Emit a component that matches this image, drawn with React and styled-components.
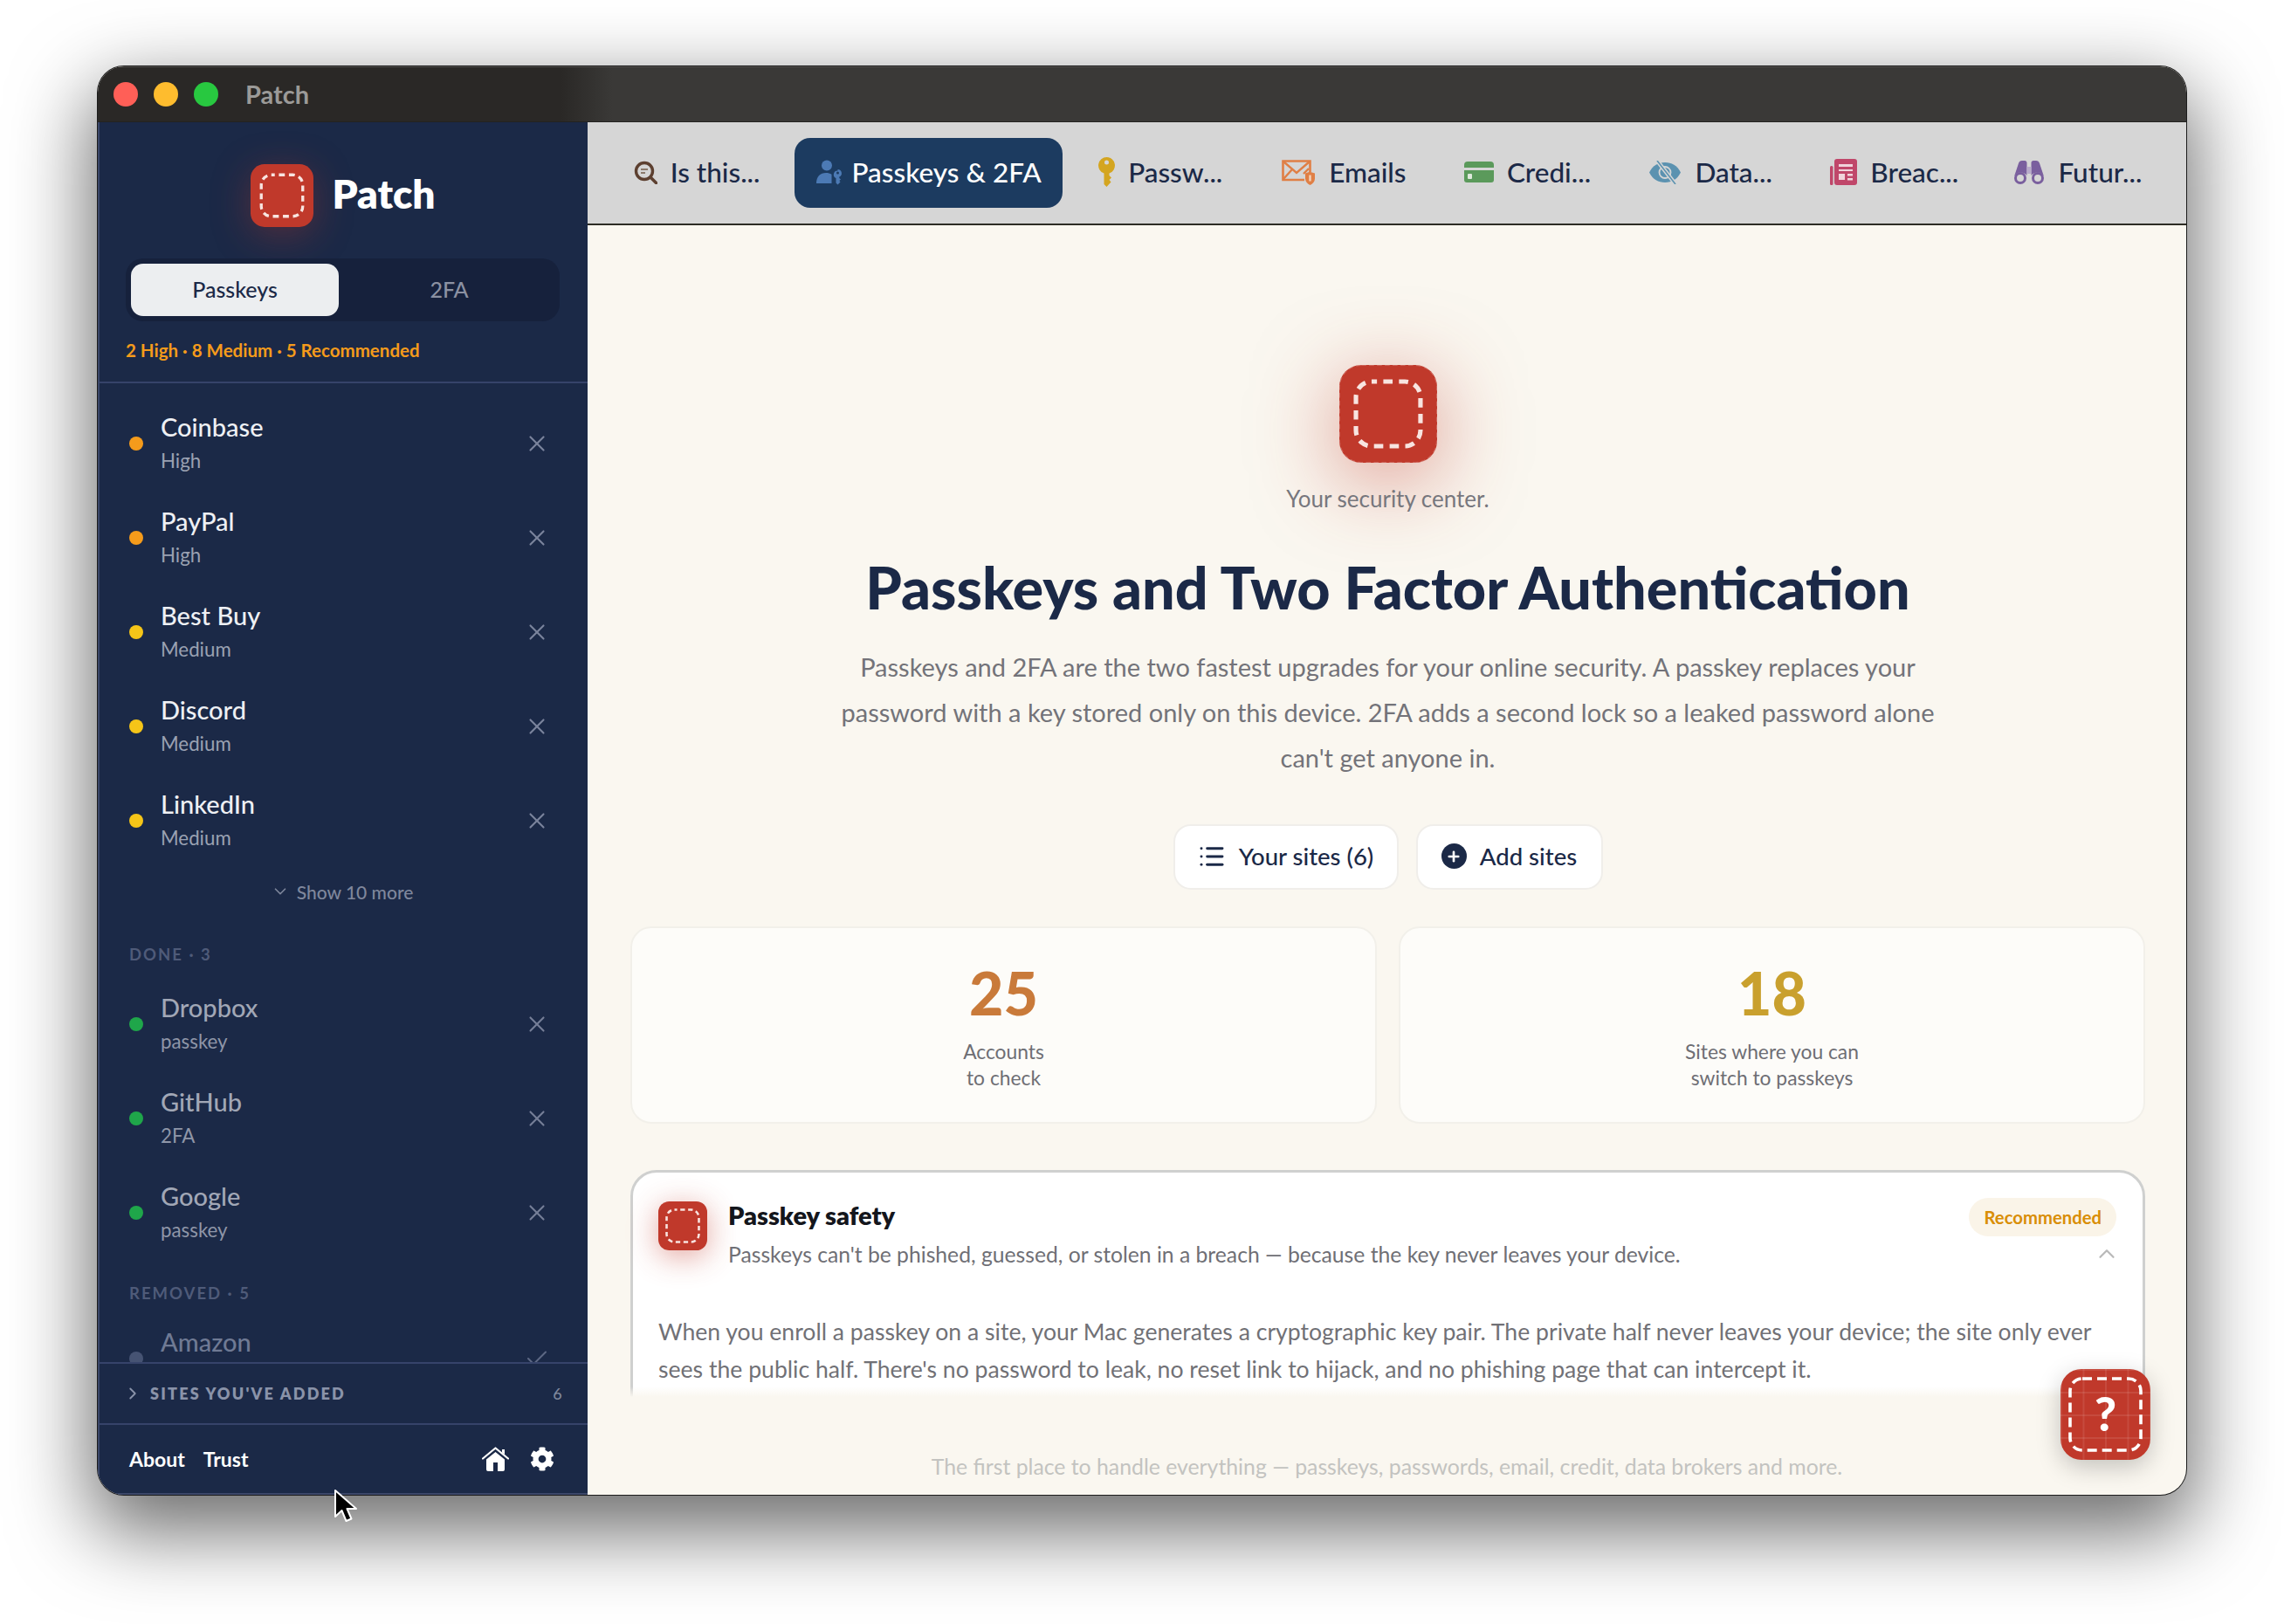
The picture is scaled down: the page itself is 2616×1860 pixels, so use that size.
import React from 'react';
import styled, { createGlobalStyle } from 'styled-components';
import { X, Check, ChevronDown, ChevronRight, ChevronUp, List, Plus } from 'lucide-react';
import { FaCog } from 'react-icons/fa';

const NAVY = '#1b2947';
const RED = '#c0392b';
const FONT = 'Lato, "Noto Sans", sans-serif';

const GlobalStyle = createGlobalStyle`
  html, body {
    margin: 0;
    background: #fff;
  }
  * {
    box-sizing: border-box;
  }
  body {
    font-family: ${FONT};
    -webkit-font-smoothing: antialiased;
  }
`;

// 페이지 / 창
const Stage = styled.div`
  position: relative;
  width: 2616px;
  height: 1860px;
  padding: 76px 112px 148px;
  overflow: hidden;
`;

const Window = styled.div`
  position: relative;
  width: 2392px;
  height: 1636px;
  display: flex;
  flex-direction: column;
  border-radius: 30px;
  overflow: hidden;
  background: #faf7f0;
  box-shadow: 0 0 0 1px #1c1c1c, 0 34px 90px 8px rgba(0, 0, 0, 0.58);
`;

const TitleBar = styled.div`
  height: 64px;
  flex: none;
  display: flex;
  align-items: center;
  padding-left: 18px;
  background: linear-gradient(to right, #2a2826 0, #2a2826 530px, #3a3937 590px);
  border-top: 1px solid #55524f;
  border-bottom: 1px solid #232220;
`;

const Light = styled.span`
  width: 28px;
  height: 28px;
  border-radius: 50%;
  margin-right: 18px;
  background: ${(p) => p.$color};
`;

const WindowTitle = styled.span`
  margin-left: 13px;
  padding-bottom: 2px;
  font-size: 29px;
  font-weight: 700;
  color: #9b9a98;
`;

const Body = styled.div`
  flex: 1;
  min-height: 0;
  display: flex;
`;

// 사이드바
const Sidebar = styled.aside`
  width: 561px;
  flex: none;
  display: flex;
  flex-direction: column;
  background: ${NAVY};
  border-left: 2px solid #3b4769;
  border-bottom: 2px solid #3b4769;
`;

const Brand = styled.div`
  margin-top: 48px;
  height: 72px;
  display: flex;
  align-items: center;
  justify-content: center;
  gap: 21px;
  padding-right: 1px;
`;

const BrandName = styled.span`
  font-size: 46px;
  font-weight: 800;
  color: #fff;
  line-height: 66px;
  margin-bottom: 4px;
`;

const MarkBox = styled.span`
  display: block;
  flex: none;
  width: ${(p) => p.$size}px;
  height: ${(p) => p.$size}px;
  border-radius: 22%;
  box-shadow: 0 ${(p) => p.$size * p.$spread * 0.2}px ${(p) => p.$size * p.$spread}px rgba(192, 57, 43, ${(p) => p.$glow});
  svg {
    display: block;
  }
`;

const Segmented = styled.div`
  margin: 36px 32px 0 30px;
  height: 72px;
  padding: 6px;
  display: grid;
  grid-template-columns: 238px 1fr;
  border-radius: 20px;
  background: #16213c;
`;

const Segment = styled.button`
  border: 0;
  padding: 0 0 3px ${(p) => (p.$active ? 0 : 6)}px;
  border-radius: 14px;
  font-family: ${FONT};
  font-size: 25px;
  font-weight: 500;
  background: ${(p) => (p.$active ? '#eceef0' : 'transparent')};
  color: ${(p) => (p.$active ? NAVY : '#8b91a2')};
`;

const Summary = styled.div`
  margin-top: 18px;
  padding: 0 0 21px 30px;
  font-size: 20.5px;
  line-height: 30px;
  font-weight: 700;
  color: #f59b1b;
  border-bottom: 2px solid #36436a;
`;

const SiteList = styled.div`
  flex: 1;
  min-height: 0;
  overflow: hidden;
  padding-top: 15px;
`;

const Row = styled.div`
  height: 108px;
  display: flex;
  align-items: center;
  padding: 0 43px 0 34px;
  gap: 20px;
`;

const Dot = styled.span`
  width: 16px;
  height: 16px;
  border-radius: 50%;
  flex: none;
  background: ${(p) => p.$color};
`;

const SiteText = styled.div`
  flex: 1;
  min-width: 0;
`;

const SiteName = styled.div`
  font-size: 29px;
  line-height: 39px;
  font-weight: 500;
  color: ${(p) => p.$color};
`;

const SiteSub = styled.div`
  font-size: 22.3px;
  line-height: 39px;
  color: ${(p) => p.$color};
`;

const RowIcon = styled.span`
  display: flex;
  color: ${(p) => p.$color};
`;

const ShowMore = styled.div`
  height: 54px;
  display: flex;
  align-items: center;
  justify-content: center;
  gap: 8px;
  padding-right: 4px;
  font-size: 21px;
  font-weight: 500;
  color: #7f879c;
`;

const GroupLabel = styled.div`
  margin: ${(p) => p.$top}px 0 ${(p) => p.$bottom}px 34px;
  height: 36px;
  line-height: 36px;
  font-size: 18.5px;
  font-weight: 700;
  letter-spacing: 2px;
  color: #4f5b79;
`;

const AddedRow = styled.div`
  height: 72px;
  flex: none;
  display: flex;
  align-items: center;
  padding: 0 27px 0 27px;
  gap: 9px;
  border-top: 2px solid #36436a;
  border-bottom: 2px solid #36436a;
  font-size: 18px;
  font-weight: 800;
  letter-spacing: 2.2px;
  color: #8a93a9;
`;

const AddedCount = styled.span`
  margin-left: auto;
  font-weight: 500;
  color: #7f879c;
`;

const SideFooter = styled.div`
  height: 78px;
  flex: none;
  display: flex;
  align-items: center;
  padding: 0 38px 0 34px;
  font-size: 23px;
  font-weight: 700;
  color: #fff;
`;

const FooterLink = styled.span`
  margin-right: 21px;
`;

const FooterIcons = styled.div`
  margin-left: auto;
  display: flex;
  align-items: center;
  gap: 24px;
`;

// 탭 바
const Main = styled.main`
  flex: 1;
  min-width: 0;
  display: flex;
  flex-direction: column;
`;

const TabBar = styled.nav`
  height: 118px;
  flex: none;
  display: flex;
  align-items: center;
  gap: 14px;
  padding: 0 26px 0 27px;
  background: #d6d6d6;
  border-bottom: 2px solid #2d2c24;
`;

const Tab = styled.div`
  flex: ${(p) => (p.$active ? '0 0 307px' : '1 1 0')};
  min-width: 0;
  height: 80px;
  display: flex;
  align-items: center;
  justify-content: center;
  gap: ${(p) => (p.$active ? 11 : 15)}px;
  padding-bottom: 2px;
  border-radius: 18px;
  font-size: 31.5px;
  font-weight: 500;
  white-space: nowrap;
  color: ${(p) => (p.$active ? '#fff' : NAVY)};
  background: ${(p) => (p.$active ? '#1c3b60' : 'transparent')};
  svg {
    flex: none;
  }
`;

// 본문
const Scroll = styled.div`
  position: relative;
  flex: 1;
  min-height: 0;
  overflow: hidden;
  padding: 160px 47px 0 49px;
`;

const Fade = styled.div`
  position: absolute;
  left: 0;
  right: 0;
  bottom: 0;
  height: 12px;
  background: linear-gradient(to bottom, rgba(250, 247, 240, 0), #faf7f0);
`;

const Hero = styled.section`
  display: flex;
  flex-direction: column;
  align-items: center;
  text-align: center;
`;

const Tagline = styled.div`
  margin-top: 23px;
  font-size: 26px;
  line-height: 36px;
  color: #77777d;
`;

const Heading = styled.h1`
  margin: 43px 0 0;
  font-size: 66.5px;
  line-height: 80px;
  font-weight: 900;
  color: ${NAVY};
`;

const Lead = styled.p`
  margin: 26px 0 0;
  width: 1270px;
  font-size: 29px;
  line-height: 52px;
  color: #737379;
`;

const Actions = styled.div`
  margin-top: 50px;
  display: flex;
  gap: 20px;
`;

const ActionButton = styled.button`
  width: ${(p) => p.$width}px;
  height: 75px;
  display: flex;
  align-items: center;
  justify-content: center;
  gap: 15px;
  padding: 0 0 2px;
  border: 2px solid #f0eeea;
  border-radius: 20px;
  background: #fff;
  font-family: ${FONT};
  font-size: 27.5px;
  font-weight: 500;
  color: ${NAVY};
`;

const PlusDisc = styled.span`
  width: 29px;
  height: 29px;
  border-radius: 50%;
  display: flex;
  align-items: center;
  justify-content: center;
  background: ${NAVY};
  color: #fff;
`;

const Stats = styled.div`
  margin-top: 42px;
  display: grid;
  grid-template-columns: 1fr 1fr;
  gap: 25px;
`;

const StatCard = styled.div`
  height: 226px;
  padding-top: 34px;
  text-align: center;
  border-radius: 24px;
  border: 2px solid #f2f0ea;
  background: #fdfcf9;
`;

const StatNumber = styled.div`
  font-size: 68px;
  line-height: 80px;
  font-weight: 900;
  color: ${(p) => p.$color};
`;

const StatLabel = styled.div`
  margin-top: 12px;
  font-size: 22.8px;
  line-height: 30px;
  color: #6e6e74;
`;

const InfoCard = styled.article`
  margin-top: 53px;
  height: 420px;
  padding: 29px 30px 0 29px;
  border: 3px solid #cfd0cf;
  border-radius: 30px;
  background: #fff;
`;

const InfoHeader = styled.header`
  display: flex;
  align-items: flex-start;
  gap: 24px;
`;

const InfoIcon = styled.div`
  margin-top: 4px;
`;

const InfoText = styled.div`
  flex: 1;
  min-width: 0;
  padding-top: 5px;
`;

const InfoTitle = styled.div`
  font-size: 29px;
  line-height: 30px;
  font-weight: 800;
  color: #14161c;
`;

const InfoDesc = styled.div`
  margin-top: 8px;
  font-size: 24.7px;
  line-height: 44px;
  color: #6f6f75;
`;

const InfoSide = styled.div`
  display: flex;
  flex-direction: column;
  align-items: flex-end;
`;

const Badge = styled.span`
  height: 44px;
  padding: 0 17px;
  display: flex;
  align-items: center;
  border-radius: 22px;
  background: #faf4e8;
  font-size: 20.3px;
  font-weight: 700;
  color: #d98e06;
`;

const Chevron = styled.span`
  display: flex;
  margin: 5px -4px 0 0;
  color: #b9b9b9;
`;

const InfoBody = styled.p`
  margin: 45px 0 0;
  font-size: 26.6px;
  line-height: 43px;
  color: #717176;
`;

const Tagline2 = styled.div`
  height: 112px;
  flex: none;
  padding-top: 62px;
  text-align: center;
  font-size: 24.8px;
  line-height: 36px;
  color: #c3c3c0;
`;

const HelpButton = styled.button`
  position: absolute;
  right: 41px;
  bottom: 40px;
  width: 103px;
  height: 104px;
  padding: 0 0 4px;
  border: 0;
  border-radius: 24px;
  display: flex;
  align-items: center;
  justify-content: center;
  font-family: ${FONT};
  font-size: 54px;
  font-weight: 900;
  color: #fff;
  background-color: ${RED};
  background-image: linear-gradient(to right, rgba(255, 255, 255, 0.09) 2px, transparent 2px),
    linear-gradient(to bottom, rgba(255, 255, 255, 0.09) 2px, transparent 2px);
  background-size: 25.5px 26px;
  background-position: 0 0;
  box-shadow: 0 8px 28px rgba(0, 0, 0, 0.22);
  svg {
    position: absolute;
    inset: 0;
  }
`;

// 마우스 커서
const Cursor = styled.svg`
  position: absolute;
  left: 381px;
  top: 1705px;
`;

// 로고
const Mark = ({ size, glow = 0.4, spread = 0.6, stitched }) => (
  <MarkBox $size={size} $glow={glow} $spread={spread}>
    <svg width={size} height={size} viewBox="0 0 100 100">
      <rect width="100" height="100" rx="22" fill={RED} />
      {stitched && (
        <rect x="0.5" y="0.5" width="99" height="99" rx="22" fill="none" stroke="#fff" strokeOpacity="0.35" strokeWidth="0.6" strokeDasharray="5 3" />
      )}
      <rect x="17" y="17" width="66" height="66" rx="16" fill="none" stroke="#f8e4e0" strokeWidth="4.6" strokeDasharray="9.5 6.5" strokeDashoffset="4" />
    </svg>
  </MarkBox>
);

// 탭 아이콘
const SearchIcon = () => (
  <svg width="27" height="27" viewBox="0 0 27 27" fill="none">
    <circle cx="12" cy="12" r="9.5" stroke="#5d4030" strokeWidth="3.4" />
    <path d="M19 19l6.500 6.500" stroke="#5d4030" strokeWidth="3.6" strokeLinecap="round" />
    <path d="M8 10h8M8 14h5" stroke="#8b7a6c" strokeWidth="2.2" />
  </svg>
);

const PersonKeyIcon = () => (
  <svg width="30" height="29" viewBox="0 0 30 29" fill="#4c7ab5">
    <circle cx="12" cy="6.500" r="6" />
    <path d="M0 27c0-8 4.500-12 11-12 2.500 0 4.800.6 6.500 1.800V27z" />
    <path fillRule="evenodd" d="M24.500 11a4.500 4.500 0 0 1 1.800 8.600V21l1.700 1.500-1.700 1.500 1.200 1.400-3 3-2-2v-5.300a4.500 4.500 0 0 1 2-8.600zm0 2.500a1.500 1.500 0 1 0 0 3 1.500 1.500 0 0 0 0-3z" />
  </svg>
);

const KeyIcon = () => (
  <svg width="19" height="34" viewBox="0 0 19 34" fill="#d4a520">
    <path fillRule="evenodd" d="M9.500 0a9.500 9.500 0 0 1 3 18.500V21l2.500 2.500-2.500 2.500 2 2.500-5 5.500-3-3V18.500A9.500 9.500 0 0 1 9.500 0zm0 3.500a2.500 2.500 0 1 0 0 5 2.500 2.500 0 0 0 0-5z" />
  </svg>
);

const MailIcon = () => (
  <svg width="39" height="29" viewBox="0 0 39 29" fill="none">
    <path d="M26 23H1.500V1.500h31V14" stroke="#e07f45" strokeWidth="2.6" />
    <path d="M2 2l15 13 15-13M2 22l10-11M31 10l-6 6" stroke="#e07f45" strokeWidth="2.4" />
    <path d="M27 15.500l5-1.800 6 1.800v6c0 3.500-2.500 6-5.500 7.500-3-1.500-5.500-4-5.500-7.500z" fill="#e07f45" />
    <path d="M32.500 17.500v7" stroke="#f3d3bc" strokeWidth="2.400" />
  </svg>
);

const CardIcon = () => (
  <svg width="34" height="24" viewBox="0 0 34 24">
    <path d="M0 4a4 4 0 0 1 4-4h26a4 4 0 0 1 4 4v3H0z" fill="#5b9a5b" />
    <path d="M0 10h34v11a3 3 0 0 1-3 3H3a3 3 0 0 1-3-3z" fill="#5b9a5b" />
    <rect x="4" y="14" width="5" height="6" rx="1" fill="#dfe9dc" />
  </svg>
);

const EyeOffIcon = () => (
  <svg width="37" height="27" viewBox="0 0 37 27">
    <path d="M0 13.500C4 5.500 10.500 2 18 2s14 3.500 18 11.500C32 21.500 25.500 25 18 25S4 21.500 0 13.500z" fill="#5b92b0" />
    <circle cx="18" cy="13.500" r="6.500" fill="none" stroke="#d6d6d6" strokeWidth="1.800" />
    <path d="M9 0l21 27" stroke="#d6d6d6" strokeWidth="4.500" />
    <path d="M9 0l21 27" stroke="#5b92b0" strokeWidth="1.600" />
  </svg>
);

const NewsIcon = () => (
  <svg width="31" height="30" viewBox="0 0 31 30">
    <rect x="5" y="0" width="26" height="30" rx="3" fill="#c0476a" />
    <rect x="0" y="8" width="3.500" height="22" rx="1.500" fill="#c0476a" />
    <path d="M10 6h16v3H10zM10 12h16v2H10z" fill="#f0d3db" />
    <rect x="10" y="17" width="7" height="7" fill="#f0d3db" />
    <path d="M20 17h6v2.500h-6zM20 22h6v2.500h-6z" fill="#f0d3db" />
  </svg>
);

const BinocularsIcon = () => (
  <svg width="36" height="27" viewBox="0 0 36 27">
    <circle cx="8" cy="20" r="5.500" fill="none" stroke="#7a5f9e" strokeWidth="3" />
    <circle cx="28" cy="20" r="5.500" fill="none" stroke="#7a5f9e" strokeWidth="3" />
    <path d="M1 18L6 3c.6-2 2-3 4-3h3c1.500 0 2.500 1 2.500 2.500V17c-1.500-2-4-3.500-7.500-3.500-3 0-5.500 1.800-7 4.500z" fill="#7a5f9e" />
    <path d="M35 18L30 3c-.6-2-2-3-4-3h-3c-1.500 0-2.500 1-2.500 2.500V17c1.500-2 4-3.500 7.500-3.500 3 0 5.500 1.800 7 4.500z" fill="#7a5f9e" />
    <rect x="15.500" y="7" width="5" height="8" fill="#b9abcb" />
  </svg>
);

const HouseIcon = () => (
  <svg width="31" height="28" viewBox="0 0 31 28" fill="#fff">
    <path d="M1 13.500L15.500 1.500 30 13.500" fill="none" stroke="#fff" strokeWidth="2.200" strokeLinecap="round" strokeLinejoin="round" />
    <path d="M23 3h3v6l-3-2.500z" />
    <path fillRule="evenodd" d="M15.500 6L26 14.500V26a2 2 0 0 1-2 2H7a2 2 0 0 1-2-2V14.500zM13 18v10h5V18z" />
  </svg>
);

const sidebarTop = [
  { name: 'Coinbase', sub: 'High', dot: '#f59b1b' },
  { name: 'PayPal', sub: 'High', dot: '#f59b1b' },
  { name: 'Best Buy', sub: 'Medium', dot: '#f5c518' },
  { name: 'Discord', sub: 'Medium', dot: '#f5c518' },
  { name: 'LinkedIn', sub: 'Medium', dot: '#f5c518' },
];

const sidebarDone = [
  { name: 'Dropbox', sub: 'passkey' },
  { name: 'GitHub', sub: '2FA' },
  { name: 'Google', sub: 'passkey' },
];

const tabs = [
  { label: 'Is this...', icon: <SearchIcon /> },
  { label: 'Passkeys & 2FA', icon: <PersonKeyIcon />, active: true },
  { label: 'Passw...', icon: <KeyIcon /> },
  { label: 'Emails', icon: <MailIcon /> },
  { label: 'Credi...', icon: <CardIcon /> },
  { label: 'Data...', icon: <EyeOffIcon /> },
  { label: 'Breac...', icon: <NewsIcon /> },
  { label: 'Futur...', icon: <BinocularsIcon /> },
];

const SiteRow = ({ site, dot, nameColor, subColor, iconColor, icon }) => (
  <Row>
    <Dot $color={dot} />
    <SiteText>
      <SiteName $color={nameColor}>{site.name}</SiteName>
      <SiteSub $color={subColor}>{site.sub}</SiteSub>
    </SiteText>
    <RowIcon $color={iconColor}>{icon}</RowIcon>
  </Row>
);

const App = () => {
  return (
    <Stage>
      <GlobalStyle />
      <Window>
        <TitleBar>
          <Light $color="#ff5f57" />
          <Light $color="#febc2e" />
          <Light $color="#28c840" />
          <WindowTitle>Patch</WindowTitle>
        </TitleBar>
        <Body>
          <Sidebar>
            <Brand>
              <Mark size={72} glow={0.35} />
              <BrandName>Patch</BrandName>
            </Brand>
            <Segmented>
              <Segment $active>Passkeys</Segment>
              <Segment>2FA</Segment>
            </Segmented>
            <Summary>2 High · 8 Medium · 5 Recommended</Summary>
            <SiteList>
              {sidebarTop.map((site) => (
                <SiteRow
                  key={site.name}
                  site={site}
                  dot={site.dot}
                  nameColor="#eef0f4"
                  subColor="#9aa1b2"
                  iconColor="#7a839c"
                  icon={<X size={30} strokeWidth={1.7} />}
                />
              ))}
              <ShowMore>
                <ChevronDown size={22} strokeWidth={1.8} />
                Show 10 more
              </ShowMore>
              <GroupLabel $top={27} $bottom={8}>DONE · 3</GroupLabel>
              {sidebarDone.map((site) => (
                <SiteRow
                  key={site.name}
                  site={site}
                  dot="#1fa64a"
                  nameColor="#a1a7b6"
                  subColor="#8f96a8"
                  iconColor="#757e97"
                  icon={<X size={30} strokeWidth={1.7} />}
                />
              ))}
              <GroupLabel $top={20} $bottom={3}>REMOVED · 5</GroupLabel>
              <SiteRow
                site={{ name: 'Amazon', sub: 'passkey' }}
                dot="#465373"
                nameColor="#6f7a94"
                subColor="#5d6884"
                iconColor="#5d6884"
                icon={<Check size={30} strokeWidth={1.6} />}
              />
            </SiteList>
            <AddedRow>
              <ChevronRight size={22} strokeWidth={2} />
              SITES YOU'VE ADDED
              <AddedCount>6</AddedCount>
            </AddedRow>
            <SideFooter>
              <FooterLink>About</FooterLink>
              <FooterLink>Trust</FooterLink>
              <FooterIcons>
                <HouseIcon />
                <FaCog size={28} />
              </FooterIcons>
            </SideFooter>
          </Sidebar>
          <Main>
            <TabBar>
              {tabs.map((tab) => (
                <Tab key={tab.label} $active={tab.active}>
                  {tab.icon}
                  {tab.label}
                </Tab>
              ))}
            </TabBar>
            <Scroll>
              <Hero>
                <Mark size={112} glow={0.5} spread={0.85} stitched />
                <Tagline>Your security center.</Tagline>
                <Heading>Passkeys and Two Factor Authentication</Heading>
                <Lead>
                  Passkeys and 2FA are the two fastest upgrades for your online security. A passkey replaces your
                  password with a key stored only on this device. 2FA adds a second lock so a leaked password alone
                  can't get anyone in.
                </Lead>
                <Actions>
                  <ActionButton $width={258}>
                    <List size={32} strokeWidth={2.2} />
                    Your sites (6)
                  </ActionButton>
                  <ActionButton $width={214}>
                    <PlusDisc>
                      <Plus size={18} strokeWidth={3.5} />
                    </PlusDisc>
                    Add sites
                  </ActionButton>
                </Actions>
              </Hero>
              <Stats>
                <StatCard>
                  <StatNumber $color="#c97a3a">25</StatNumber>
                  <StatLabel>
                    Accounts
                    <br />
                    to check
                  </StatLabel>
                </StatCard>
                <StatCard>
                  <StatNumber $color="#c9a02e">18</StatNumber>
                  <StatLabel>
                    Sites where you can
                    <br />
                    switch to passkeys
                  </StatLabel>
                </StatCard>
              </Stats>
              <InfoCard>
                <InfoHeader>
                  <InfoIcon>
                    <Mark size={56} glow={0.45} />
                  </InfoIcon>
                  <InfoText>
                    <InfoTitle>Passkey safety</InfoTitle>
                    <InfoDesc>Passkeys can't be phished, guessed, or stolen in a breach — because the key never leaves your device.</InfoDesc>
                  </InfoText>
                  <InfoSide>
                    <Badge>Recommended</Badge>
                    <Chevron>
                      <ChevronUp size={30} strokeWidth={1.8} />
                    </Chevron>
                  </InfoSide>
                </InfoHeader>
                <InfoBody>
                  When you enroll a passkey on a site, your Mac generates a cryptographic key pair. The private half never leaves your device; the site only ever
                  sees the public half. There's no password to leak, no reset link to hijack, and no phishing page that can intercept it.
                </InfoBody>
              </InfoCard>
              <Fade />
            </Scroll>
            <Tagline2>The first place to handle everything — passkeys, passwords, email, credit, data brokers and more.</Tagline2>
          </Main>
        </Body>
        <HelpButton>
          <svg width="103" height="104" viewBox="0 0 103 104" fill="none">
            <rect x="11" y="11" width="81" height="82" rx="14" stroke="#fff" strokeWidth="3.6" strokeDasharray="11 6" />
          </svg>
          ?
        </HelpButton>
      </Window>
      <Cursor width="28" height="42" viewBox="0 0 28 42">
        <path d="M3 2v30l7.500-7 5 12 6-2.500-5-11.500H27z" fill="#000" stroke="#fff" strokeWidth="2" strokeLinejoin="round" />
      </Cursor>
    </Stage>
  );
};

export default App;
